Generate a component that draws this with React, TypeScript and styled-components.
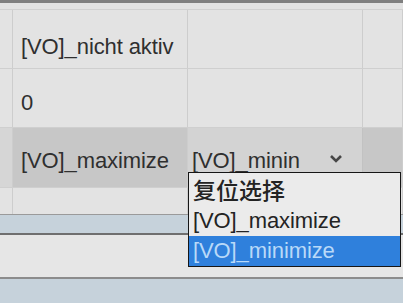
import React from 'react';
import styled, { createGlobalStyle } from 'styled-components';

const GlobalStyle = createGlobalStyle`
  html, body {
    margin: 0;
    padding: 0;
    background: #e4e4e4;
  }
  body {
    font-family: "Liberation Sans", Arial, "Noto Sans CJK SC", sans-serif;
    color: #2f2f2f;
    overflow: hidden;
  }
`;

const Screen = styled.div`
  width: 403px;
  height: 303px;
  display: flex;
  flex-direction: column;
  overflow: hidden;
  background: #e4e4e4;
`;

const TopBar = styled.div`
  height: 3px;
  flex-shrink: 0;
  background: #7f7f7f;
`;

const TopGap = styled.div`
  height: 6px;
  flex-shrink: 0;
  background: #e2e2e2;
`;

const Table = styled.div`
  display: flex;
  flex-direction: column;
  border-top: 1px solid #d0d0d0;
  flex-shrink: 0;
`;

const Row = styled.div<{ $height: number; $tone?: 'plain' | 'active'; $noLine?: boolean }>`
  display: grid;
  grid-template-columns: 13px 175px 175px 1fr;
  height: ${({ $height }) => $height}px;
  box-sizing: border-box;
  background: ${({ $tone }) => ($tone === 'active' ? '#c7c7c7' : '#e3e3e3')};
  border-bottom: ${({ $noLine }) => ($noLine ? 'none' : '1px solid #cfcfcf')};
`;

const Cell = styled.div<{ $offset?: number; $light?: boolean }>`
  display: flex;
  align-items: center;
  box-sizing: border-box;
  padding-left: 8px;
  padding-top: ${({ $offset }) => $offset ?? 0}px;
  border-right: 1px solid #cdcdcd;
  font-size: 22px;
  letter-spacing: -0.1px;
  white-space: nowrap;
  background: ${({ $light }) => ($light ? '#d6d6d6' : 'transparent')};
`;

const SelectCell = styled.div`
  position: relative;
  display: flex;
  align-items: center;
  box-sizing: border-box;
  padding: 6px 19px 0 4px;
  border-right: 1px solid #c2c2c2;
  background: #d3d3d3;
  font-size: 22px;
  letter-spacing: -0.1px;
  white-space: nowrap;
`;

const SelectValue = styled.span`
  flex: 1;
  overflow: hidden;
`;

const Chevron = styled.svg`
  width: 14px;
  height: 9px;
  margin-top: -4px;
  flex-shrink: 0;
`;

const DropList = styled.div`
  position: absolute;
  left: 0;
  top: 44px;
  width: 213px;
  box-sizing: border-box;
  border: 1px solid #161616;
  background: #ebebeb;
  z-index: 5;
`;

const Option = styled.div<{ $selected?: boolean; $cjk?: boolean; $height: number }>`
  display: flex;
  align-items: center;
  height: ${({ $height }) => $height}px;
  padding-left: 4px;
  font-size: ${({ $cjk }) => ($cjk ? '23px' : '22px')};
  font-weight: ${({ $cjk }) => ($cjk ? 500 : 400)};
  letter-spacing: ${({ $cjk }) => ($cjk ? '0' : '-0.1px')};
  color: ${({ $selected }) => ($selected ? '#b9d9f8' : '#232323')};
  background: ${({ $selected }) => ($selected ? '#2f80dc' : 'transparent')};
  font-family: ${({ $cjk }) =>
    $cjk ? '"Noto Sans CJK SC", "Liberation Sans", sans-serif' : '"Liberation Sans", Arial, sans-serif'};
`;

const Footer = styled.div`
  flex: 1;
  display: flex;
  flex-direction: column;
`;

const Band = styled.div<{ $height?: number; $color: string; $grow?: boolean }>`
  height: ${({ $height }) => ($height ? `${$height}px` : 'auto')};
  flex: ${({ $grow }) => ($grow ? 1 : '0 0 auto')};
  background: ${({ $color }) => $color};
`;

export default function App() {
  return (
    <>
      <GlobalStyle />
      <Screen>
        <TopBar />
        <TopGap />
        <Table>
          <Row $height={59}>
            <Cell />
            <Cell $offset={16}>[VO]_nicht aktiv</Cell>
            <Cell />
            <Cell />
          </Row>
          <Row $height={59}>
            <Cell />
            <Cell $offset={10}>0</Cell>
            <Cell />
            <Cell />
          </Row>
          <Row $height={60} $tone="active">
            <Cell $light />
            <Cell $offset={6}>[VO]_maximize</Cell>
            <SelectCell>
              <SelectValue>[VO]_minin</SelectValue>
              <Chevron viewBox="0 0 14 9">
                <polyline points="2,2 7,7 12,2" fill="none" stroke="#474747" strokeWidth="2.6" />
              </Chevron>
              <DropList>
                <Option $cjk $height={32}>复位选择</Option>
                <Option $height={31}>[VO]_maximize</Option>
                <Option $selected $height={30}>[VO]_minimize</Option>
              </DropList>
            </SelectCell>
            <Cell />
          </Row>
          <Row $height={26} $noLine>
            <Cell />
            <Cell />
            <Cell />
            <Cell />
          </Row>
        </Table>
        <Footer>
          <Band $height={1} $color="#9a9a9a" />
          <Band $height={18} $color="#c6d2db" />
          <Band $height={2} $color="#6f6f6f" />
          <Band $height={42} $color="#e6e6e6" />
          <Band $height={2} $color="#8c8c8c" />
          <Band $grow $color="#c6d2db" />
        </Footer>
      </Screen>
    </>
  );
}
